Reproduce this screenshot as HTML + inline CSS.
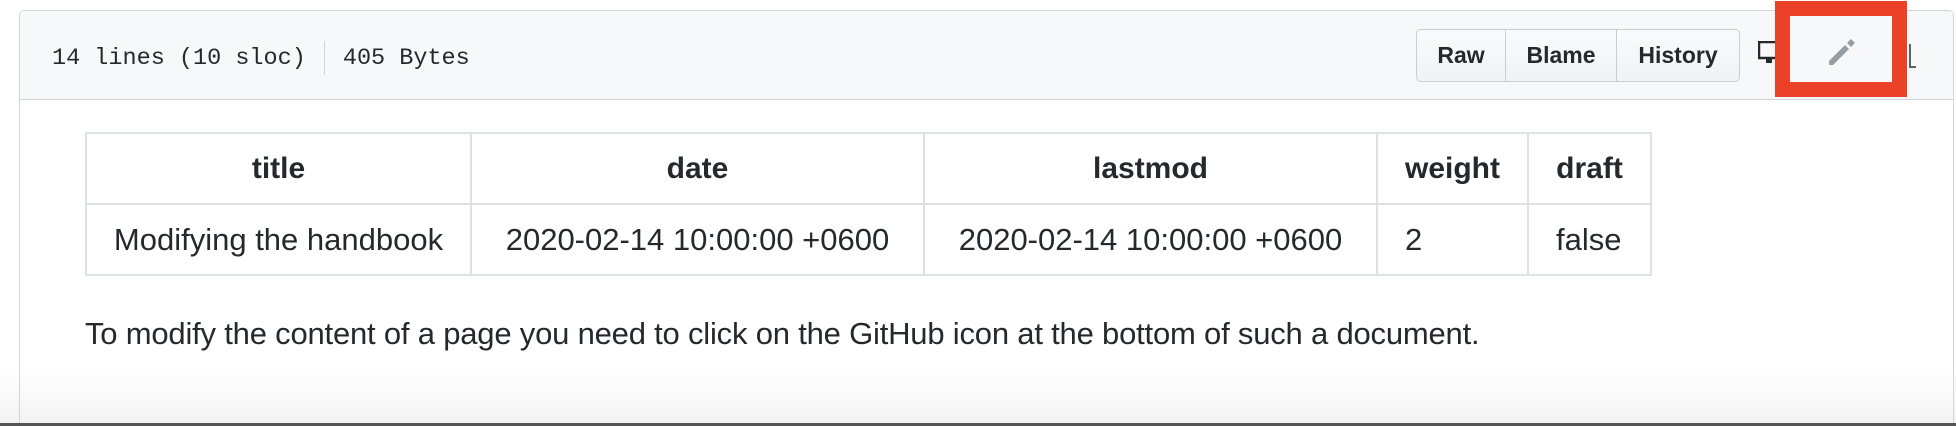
<!DOCTYPE html>
<html style="overflow:hidden;height:426px"><head><meta charset="utf-8"><style>
html,body{margin:0;overflow:hidden}
body{width:1956px;height:426px;background:#fff;position:relative;font-family:"Liberation Sans",Arial,sans-serif;color:#24292e}
.box{position:absolute;left:19px;top:10px;width:1933px;height:420px;border:1px solid #d1d5da;border-radius:5px}
.hdr{position:absolute;left:0;top:0;right:0;height:88px;background:#f6f8fa;border-bottom:1px solid #d1d5da;border-radius:5px 5px 0 0}
.meta{position:absolute;left:32px;top:30px;font-family:"Liberation Mono",monospace;font-size:23.5px;color:#24292e}
.sep{display:inline-block;width:1px;height:34px;background:#d1d5da;vertical-align:middle;margin:0 18px}
.btns{position:absolute;left:1396px;top:18px;height:51px;display:flex;border:1px solid #c9cdd2;border-radius:5px;background:linear-gradient(#fafbfc,#eff3f6);overflow:hidden}
.btns div{font-weight:bold;font-size:23px;line-height:51px;text-align:center;border-left:1px solid #c9cdd2}
.btns div:first-child{border-left:none}
table{position:absolute;left:85px;top:132px;border-collapse:collapse;font-size:31px}
td,th{border:2px solid #dfe2e5;height:69px;padding:0;text-align:center}
th{font-weight:bold;font-size:30px}
p{position:absolute;left:85px;top:316px;margin:0;font-size:31px;letter-spacing:-0.2px}
.red{position:absolute;left:1775px;top:1px;width:102px;height:66px;border:15px solid #ea4128;background:#f6f8fa}
.bot{position:absolute;left:0;top:423px;width:1956px;height:3px;background:#555}
.fade{position:absolute;left:0;top:370px;width:1956px;height:53px;background:linear-gradient(#fff,#f3f3f3)}
</style></head><body>
<div class="fade"></div>
<div class="box">
<div class="hdr">
<div class="meta">14 lines (10 sloc)<span class="sep"></span>405 Bytes</div>
<div class="btns"><div style="width:88px">Raw</div><div style="width:110px">Blame</div><div style="width:122px">History</div></div>
<svg style="position:absolute;left:1738px;top:30px" width="20" height="27" viewBox="0 0 20 27"><rect x="1" y="1" width="18" height="16" fill="none" stroke="#24292e" stroke-width="2.5"/><path d="M8 17h6v5H8z" fill="#24292e"/></svg>
<svg style="position:absolute;left:1888px;top:32px" width="10" height="26"><path d="M2 1v23h6" fill="none" stroke="#586069" stroke-width="2"/></svg>
</div>
</div>
<div class="red"></div>
<svg style="position:absolute;left:1826px;top:36px" width="32" height="32" viewBox="0 0 16 16"><path d="M1.5 12.5v2h2l8-8-2-2zM10.5 3.5l2-2 2 2-2 2z" fill="#959da5"/></svg>
<table>
<tr><th style="width:383px">title</th><th style="width:451px">date</th><th style="width:451px">lastmod</th><th style="width:149px">weight</th><th style="width:121px">draft</th></tr>
<tr><td>Modifying the handbook</td><td>2020-02-14 10:00:00 +0600</td><td>2020-02-14 10:00:00 +0600</td><td style="text-align:left;padding-left:27px">2</td><td style="text-align:left;padding-left:27px">false</td></tr>
</table>
<p>To modify the content of a page you need to click on the GitHub icon at the bottom of such a document.</p>
<div class="bot"></div>
</body></html>
